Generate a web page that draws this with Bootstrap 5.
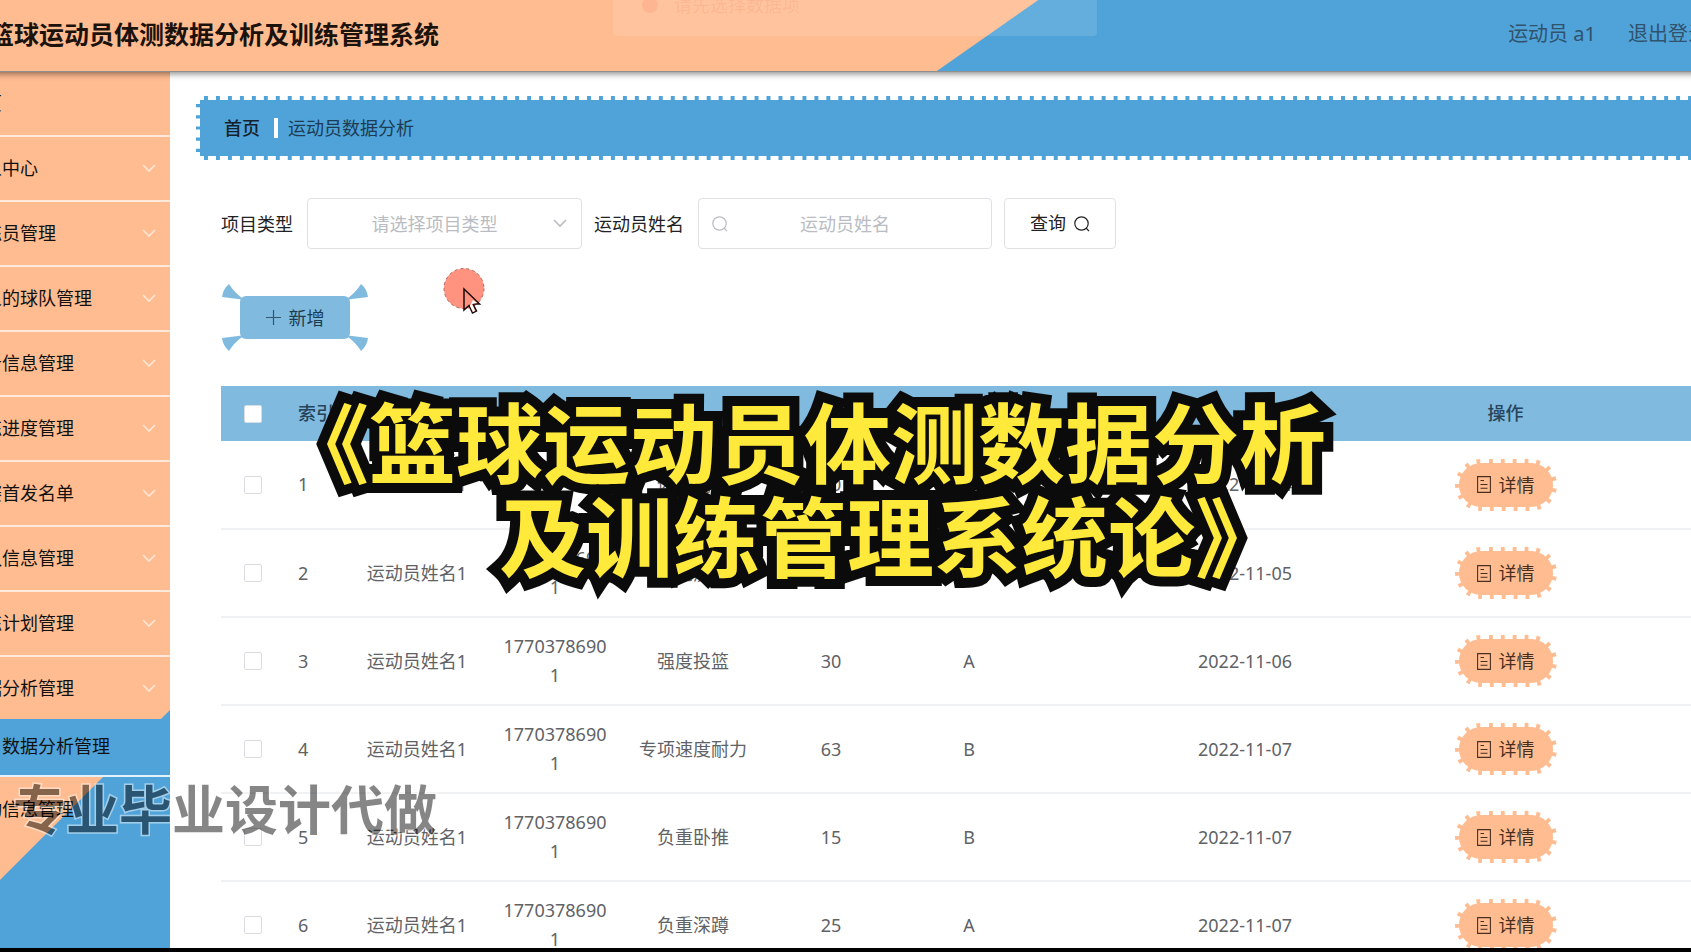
<!DOCTYPE html>
<html lang="zh-CN">
<head>
<meta charset="utf-8">
<meta name="viewport" content="width=device-width, initial-scale=1">
<title>篮球运动员体测数据分析及训练管理系统</title>
<link href="https://cdn.jsdelivr.net/npm/bootstrap@5.3.0/dist/css/bootstrap.min.css" rel="stylesheet">
<style>
:root{--peach:#ffbc90;--sky:#4fa3d9;--sky-soft:#80bbdf;--line:#dfe1e5}
body{font-family:"Noto Sans","Noto Sans CJK SC",sans-serif;font-size:18px;line-height:28px;color:#222;background:#fff;overflow:hidden}
.stage{border-bottom:4px solid #000;overflow:hidden}
.app{margin:0 -57px 0 -54px;min-height:0}
.app-body{min-height:0}
.topbar{height:72px;padding:0 40px 0 43px;background:linear-gradient(145deg,var(--peach) 626px,var(--sky) 627px);border-bottom:1px solid #8f8f8f;box-shadow:0 2px 6px rgba(0,0,0,.45);z-index:2;position:relative}
.topbar h1{font-size:25px;line-height:32px;font-weight:700;color:#1c120c;margin:0 0 4px}
.topbar a,.who{font-size:20px;color:#31526b;text-decoration:none}
.userbox{gap:32px;margin-bottom:4px}
.side{width:224px;background:linear-gradient(135deg,var(--peach) 609px,var(--sky) 610px)}
.side a{height:65px;padding:0 14px 2px 20px;border-bottom:2px solid #ffe9da;color:#111;text-decoration:none}
.side a svg{color:#ffe6d5}
.side a.opened{height:62px;padding-bottom:0;border:0}
.side a.sub{height:58px;padding-left:56px;background:var(--sky);border-color:#e3f1fa}
.side a:last-child{border:0}
.main{padding:24px 24px 24px 26px;min-width:0;overflow:hidden}
.crumbs{height:64px;padding:0 24px;border:4px dashed #fff;background:var(--sky);color:#1d3b52}
.crumbs a{color:#15222c;text-decoration:none;font-weight:500}
.crumbs .bar{width:4px;height:20px;background:#fff;margin:0 10px 0 14px}
.panel{padding:38px 27px 0 25px}
.filters{gap:12px}
.filters label{margin-right:2px}
.box{height:51px;border:1px solid var(--line);border-radius:4px;background-color:#fff;color:#b9bcc2;text-align:center}
.box::placeholder{color:#b9bcc2;opacity:1}
select.box{width:275px;padding:0 40px 0 20px;text-align-last:center;appearance:none}
input.box{width:294px;padding:0 36px}
.hold{position:relative}
.hold svg{position:absolute;top:18px;color:#b9bcc2;pointer-events:none}
.hold .at-end{right:15px}
.hold .at-start{left:14px}
.btn-find{height:51px;width:112px;border:1px solid var(--line);border-radius:4px;background:#fff;color:#222;font-size:18px;padding:0}
.btn-add{position:relative;width:110px;height:43px;margin:47px 19px;border:0;border-radius:6px;background:var(--sky-soft);color:#1d3b50;font-size:18px;padding:0}
.btn-add .ribbons{position:absolute;left:-19px;top:-12px;color:var(--sky-soft)}
.grid{table-layout:fixed;width:100%;text-align:center;line-height:29px;color:#606266}
.c-tick{width:63px}
.c-idx{width:64px}
.c-data{width:138px}
.grid th{height:55px;background:var(--sky-soft);color:#27435a;font-weight:500;padding:0 14px;white-space:nowrap}
.grid td{height:88px;border-bottom:2px solid #f0f1f3;padding:0 14px;word-break:break-all}
.grid td.tight{padding:0;white-space:nowrap}
.grid .idx{text-align:left}
.tick{appearance:none;display:block;width:18px;height:18px;margin:0 auto;border:1px solid #d9dce2;border-radius:2px;background:#fff}
.btn-more{width:102px;height:52px;border:4px dashed #fff;border-radius:26px;background:var(--peach);color:#4a2e1e;font-size:18px;line-height:28px;padding:0}
.toastbox{position:absolute;left:667px;top:-12px;width:484px;height:48px;padding:0 29px 14px;background:rgba(255,255,255,.12);font-size:18px;color:rgba(240,110,90,.16);border-radius:4px;overflow:hidden}
.caption-text{position:absolute;left:282px;top:392px;font-family:"Noto Sans CJK SC",sans-serif;font-size:87px;line-height:94px;font-weight:700;color:#ffe93b;-webkit-text-stroke:20px #0b0b0c;paint-order:stroke fill;white-space:nowrap;z-index:6;pointer-events:none}
.caption-text .second{padding-left:217px}
.stamp{position:absolute;left:13px;top:777px;font-family:"Noto Sans CJK SC",sans-serif;font-size:53px;line-height:60px;font-weight:700;color:#000;-webkit-text-stroke:3px #fff;paint-order:stroke fill;opacity:.47;white-space:nowrap;z-index:5;pointer-events:none}
.pointer{position:absolute;left:443px;top:267px;z-index:4;pointer-events:none}
</style>
</head>
<body>
<svg width="0" height="0" class="d-none">
  <symbol id="down" viewBox="0 0 14 14"><path d="M1 4l6 6 6-6" fill="none" stroke="currentColor" stroke-width="1.6"/></symbol>
  <symbol id="lens" viewBox="0 0 16 16"><circle cx="7.5" cy="7.5" r="6.7" fill="none" stroke="currentColor" stroke-width="1.2"/><path d="M12 12l3 3.200" fill="none" stroke="currentColor" stroke-width="1.2"/></symbol>
  <symbol id="doc" viewBox="0 0 14 17"><path d="M.6.6h12.800v15.800H.6zM3.500 4.500h3.500M3.500 8.500h7M3.500 12.200h7" fill="none" stroke="currentColor" stroke-width="1.1"/></symbol>
</svg>
<div class="stage vh-100 d-flex flex-column position-relative">
  <div class="app d-flex flex-column flex-grow-1">
    <header class="topbar d-flex align-items-center justify-content-between flex-shrink-0">
      <h1>篮球运动员体测数据分析及训练管理系统</h1>
      <div class="toastbox d-flex align-items-center gap-3" role="status">
        <svg width="16" height="16"><circle cx="8" cy="8" r="8" fill="currentColor"/></svg><span>请先选择数据项</span>
      </div>
      <div class="userbox d-flex"><span class="who">运动员 a1</span><a href="#">退出登录</a></div>
    </header>
    <div class="app-body d-flex flex-grow-1">
      <nav class="side flex-shrink-0" id="side"></nav>
      <main class="main flex-grow-1">
        <div class="crumbs d-flex align-items-center"><a href="#">首页</a><span class="bar"></span><span>运动员数据分析</span></div>
        <div class="panel">
          <form class="filters d-flex align-items-center">
            <label for="kind">项目类型</label>
            <div class="hold">
              <select class="box" id="kind"><option>请选择项目类型</option></select>
              <svg class="at-end" width="14" height="14"><use href="#down"/></svg>
            </div>
            <label for="who">运动员姓名</label>
            <div class="hold">
              <svg class="at-start" width="16" height="16"><use href="#lens"/></svg>
              <input class="box" id="who" type="text" placeholder="运动员姓名">
            </div>
            <button type="button" class="btn btn-find d-flex align-items-center justify-content-center gap-2">查询<svg width="16" height="16"><use href="#lens"/></svg></button>
          </form>
          <button type="button" class="btn-add d-flex align-items-center justify-content-center gap-2">
            <svg class="ribbons" width="148" height="67" viewBox="0 0 148 67" fill="currentColor"><path d="M21 15.500L1 13Q2 5 8 0Q13 8 21 14z"/><path d="M127 15.500L147 13Q146 5 140 0Q135 8 127 14z"/><path d="M21 51.500L1 54Q2 62 8 67Q13 59 21 53z"/><path d="M127 51.500L147 54Q146 62 140 67Q135 59 127 53z"/></svg>
            <svg width="15" height="15"><path d="M7.500 0v15M0 7.500h15" stroke="#33566d" stroke-width="1.2"/></svg>新增
          </button>
          <table class="grid">
            <colgroup><col class="c-tick"><col class="c-idx"><col class="c-data" span="7"><col></colgroup>
            <thead><tr><th><input class="tick" type="checkbox" aria-label="全选"></th><th class="idx">索引</th><th></th><th></th><th></th><th></th><th></th><th></th><th></th><th>操作</th></tr></thead>
            <tbody id="rows"></tbody>
          </table>
        </div>
      </main>
    </div>
  </div>
  <svg class="pointer" width="42" height="48" viewBox="0 0 42 48"><circle cx="21" cy="21.500" r="20" fill="#ff937f" stroke="#b0655b" stroke-dasharray="3 3"/><path d="M21 22v21l5-4.500 3.500 7.500 4-2-3.500-7h6.500z" fill="#ff937f" stroke="#1a0d0b" stroke-width="1.500"/><path d="M27 39l3 6 2-1-3-7 5-1-4-3z" fill="#fff"/></svg>
  <div class="stamp">专业毕业设计代做</div>
  <div class="caption-text"><div>《篮球运动员体测数据分析</div><div class="second">及训练管理系统论》</div></div>
</div>
<script src="https://cdn.jsdelivr.net/npm/bootstrap@5.3.0/dist/js/bootstrap.bundle.min.js"></script>
<script>
const menu=[["首页"],["个人中心",1],["教练员管理",1],["个人的球队管理",1],["公告信息管理",1],["训练进度管理",1],["比赛首发名单",1],["球队信息管理",1],["训练计划管理",1],["数据分析管理",1,"opened"],["数据分析管理",0,"sub"],["活动信息管理"]];
document.getElementById("side").innerHTML=menu.map(([t,d,c])=>`<a href="#" class="d-flex align-items-center justify-content-between ${c||""}"><span>${t}</span>${d?'<svg width="14" height="14"><use href="#down"/></svg>':""}</a>`).join("");
const rows=[["体能测试","50","A","2022-11-04"],["体能测试","45","B","2022-11-05"],["强度投篮","30","A","2022-11-06"],["专项速度耐力","63","B","2022-11-07"],["负重卧推","15","B","2022-11-07"],["负重深蹲","25","A","2022-11-07"]];
document.getElementById("rows").innerHTML=rows.map((r,i)=>`<tr><td><input class="tick" type="checkbox" aria-label="选择第${i+1}行"></td><td class="idx">${i+1}</td><td class="tight">运动员姓名1</td><td>17703786901</td><td class="tight">${r[0]}</td><td>${r[1]}</td><td>${r[2]}</td><td></td><td class="tight">${r[3]}</td><td><button type="button" class="btn-more d-inline-flex align-items-center justify-content-center gap-2"><svg width="14" height="17"><use href="#doc"/></svg>详情</button></td></tr>`).join("");
</script>
</body>
</html>
